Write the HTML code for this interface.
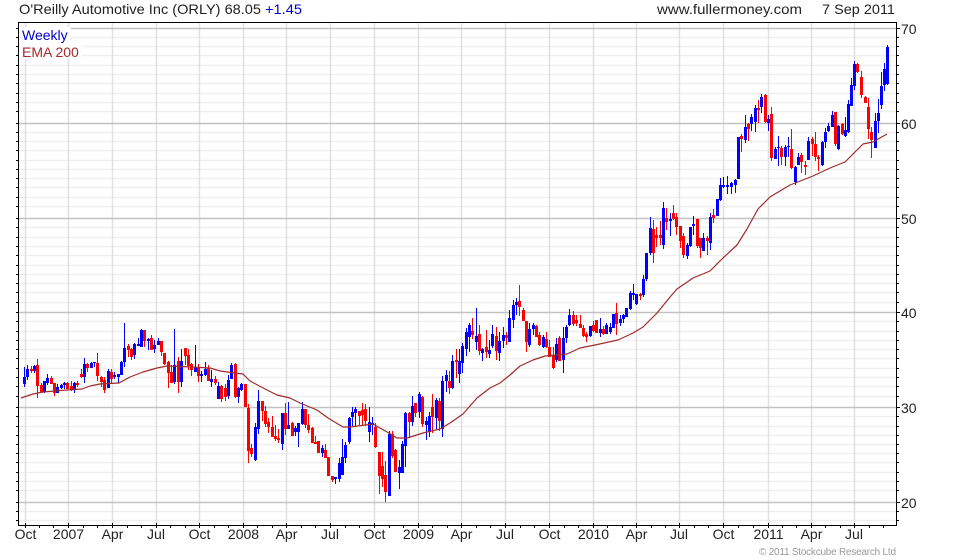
<!DOCTYPE html>
<html><head><meta charset="utf-8"><title>ORLY</title>
<style>
html,body{margin:0;padding:0;background:#fff;width:980px;height:560px;overflow:hidden}
svg{display:block}
text{font-family:"Liberation Sans",Arial,sans-serif;font-size:14px;fill:#222}
</style></head><body>
<svg width="980" height="560" viewBox="0 0 980 560" xmlns="http://www.w3.org/2000/svg">
<g fill="none" stroke-width="1.5">
<path stroke="#efefef" d="M19 37.5H896M19 46.5H896M19 55.5H896M19 65.5H896M19 74.5H896M19 83.5H896M19 93.5H896M19 102.5H896M19 111.5H896M19 132.5H896M19 141.5H896M19 150.5H896M19 160.5H896M19 169.5H896M19 178.5H896M19 187.5H896M19 197.5H896M19 206.5H896M19 227.5H896M19 237.5H896M19 246.5H896M19 255.5H896M19 265.5H896M19 274.5H896M19 283.5H896M19 292.5H896M19 302.5H896M19 321.5H896M19 331.5H896M19 340.5H896M19 349.5H896M19 358.5H896M19 368.5H896M19 377.5H896M19 386.5H896M19 396.5H896M19 416.5H896M19 426.5H896M19 435.5H896M19 444.5H896M19 453.5H896M19 462.5H896M19 472.5H896M19 481.5H896M19 490.5H896M19 511.5H896M19 520.5H896"/>
<path stroke="#e0e0e0" d="M25.5 23V525M68.5 23V525M112.5 23V525M156.5 23V525M199.5 23V525M243.5 23V525M286.5 23V525M330.5 23V525M374.5 23V525M418.5 23V525M461.5 23V525M505.5 23V525M549.5 23V525M593.5 23V525M636.5 23V525M679.5 23V525M723.5 23V525M768.5 23V525M811.5 23V525M854.5 23V525"/>
<path stroke="#c2c2c2" d="M19 28.5H896M19 123.5H896M19 218.5H896M19 312.5H896M19 407.5H896M19 502.5H896"/>
</g>
<rect x="19" y="27" width="52" height="16" fill="#fff"/>
<rect x="19" y="43" width="63" height="16" fill="#fff"/>
<path shape-rendering="crispEdges" fill="#f00" d="M30 369h3v2h-3zM31 366h1v7h-1zM36 365h3v21h-3zM37 359h1v39h-1zM40 385h3v7h-3zM41 383h1v10h-1zM50 378h3v6h-3zM51 376h1v8h-1zM53 383h3v10h-3zM54 383h1v13h-1zM66 383h3v6h-3zM67 382h1v7h-1zM70 386h3v4h-3zM71 381h1v10h-1zM76 383h3v2h-3zM77 381h1v6h-1zM80 374h3v3h-3zM81 369h1v9h-1zM86 364h3v4h-3zM87 363h1v9h-1zM96 363h3v13h-3zM97 353h1v28h-1zM100 377h3v5h-3zM101 376h1v11h-1zM103 380h3v10h-3zM104 377h1v16h-1zM110 372h3v7h-3zM111 369h1v15h-1zM127 346h3v4h-3zM128 344h1v13h-1zM130 349h3v8h-3zM131 348h1v12h-1zM143 330h3v11h-3zM144 330h1v17h-1zM150 338h3v12h-3zM151 335h1v15h-1zM160 341h3v11h-3zM161 341h1v15h-1zM163 353h3v11h-3zM164 353h1v12h-1zM167 362h3v11h-3zM168 361h1v27h-1zM170 372h3v11h-3zM171 365h1v18h-1zM177 361h3v21h-3zM178 357h1v36h-1zM184 348h3v8h-3zM185 348h1v17h-1zM187 355h3v11h-3zM188 349h1v21h-1zM190 364h3v6h-3zM191 363h1v13h-1zM197 368h3v8h-3zM198 364h1v18h-1zM207 368h3v13h-3zM208 365h1v16h-1zM214 379h3v4h-3zM215 376h1v9h-1zM220 386h3v13h-3zM221 385h1v17h-1zM224 388h3v9h-3zM225 384h1v17h-1zM234 364h3v33h-3zM235 363h1v35h-1zM244 384h3v23h-3zM245 384h1v23h-1zM247 408h3v43h-3zM248 404h1v59h-1zM250 448h3v6h-3zM251 444h1v13h-1zM261 401h3v10h-3zM262 401h1v20h-1zM264 411h3v13h-3zM265 406h1v21h-1zM267 422h3v5h-3zM268 418h1v15h-1zM271 427h3v10h-3zM272 416h1v21h-1zM274 436h3v3h-3zM275 425h1v16h-1zM277 438h3v2h-3zM278 429h1v14h-1zM284 413h3v16h-3zM285 403h1v32h-1zM291 423h3v13h-3zM292 422h1v14h-1zM304 409h3v16h-3zM305 409h1v19h-1zM307 425h3v5h-3zM308 414h1v19h-1zM311 428h3v15h-3zM312 427h1v16h-1zM314 442h3v2h-3zM315 436h1v8h-1zM317 441h3v12h-3zM318 441h1v12h-1zM324 450h3v8h-3zM325 444h1v14h-1zM327 457h3v19h-3zM328 457h1v19h-1zM331 476h3v4h-3zM332 476h1v6h-1zM358 411h3v5h-3zM359 411h1v14h-1zM361 410h3v5h-3zM362 403h1v23h-1zM364 409h3v12h-3zM365 404h1v22h-1zM374 427h3v20h-3zM375 423h1v25h-1zM378 452h3v24h-3zM379 452h1v42h-1zM381 466h3v13h-3zM382 452h1v35h-1zM384 475h3v17h-3zM385 461h1v41h-1zM391 434h3v22h-3zM392 431h1v27h-1zM394 450h3v22h-3zM395 449h1v23h-1zM408 413h3v9h-3zM409 412h1v26h-1zM414 403h3v10h-3zM415 403h1v14h-1zM421 397h3v27h-3zM422 396h1v31h-1zM431 407h3v10h-3zM432 394h1v39h-1zM438 401h3v20h-3zM439 398h1v33h-1zM448 381h3v7h-3zM449 371h1v23h-1zM455 360h3v2h-3zM456 349h1v29h-1zM471 331h3v4h-3zM472 318h1v21h-1zM478 334h3v17h-3zM479 325h1v30h-1zM485 347h3v5h-3zM486 330h1v28h-1zM495 336h3v15h-3zM496 327h1v33h-1zM505 335h3v3h-3zM506 332h1v13h-1zM518 301h3v6h-3zM519 285h1v31h-1zM522 310h3v11h-3zM523 308h1v13h-1zM525 321h3v21h-3zM526 321h1v31h-1zM535 326h3v11h-3zM536 325h1v12h-1zM538 335h3v10h-3zM539 332h1v14h-1zM545 339h3v8h-3zM546 332h1v16h-1zM548 347h3v10h-3zM549 340h1v17h-1zM552 355h3v13h-3zM553 347h1v22h-1zM558 338h3v23h-3zM559 336h1v25h-1zM572 315h3v9h-3zM573 311h1v15h-1zM575 320h3v3h-3zM576 315h1v11h-1zM579 324h3v4h-3zM580 315h1v13h-1zM582 328h3v8h-3zM583 325h1v12h-1zM585 334h3v3h-3zM586 332h1v10h-1zM592 325h3v6h-3zM593 321h1v11h-1zM595 320h3v13h-3zM596 320h1v13h-1zM602 329h3v5h-3zM603 326h1v9h-1zM615 313h3v11h-3zM616 303h1v32h-1zM639 294h3v2h-3zM640 293h1v7h-1zM652 229h3v24h-3zM653 220h1v43h-1zM655 235h3v3h-3zM656 227h1v20h-1zM659 235h3v3h-3zM660 221h1v24h-1zM665 218h3v4h-3zM666 208h1v22h-1zM672 213h3v6h-3zM673 205h1v15h-1zM675 217h3v10h-3zM676 213h1v22h-1zM679 226h3v15h-3zM680 226h1v22h-1zM682 236h3v19h-3zM683 233h1v25h-1zM696 219h3v27h-3zM697 219h1v29h-1zM699 238h3v10h-3zM700 238h1v20h-1zM706 238h3v3h-3zM707 236h1v19h-1zM712 215h3v3h-3zM713 209h1v14h-1zM740 136h3v3h-3zM741 134h1v18h-1zM747 124h3v5h-3zM748 123h1v18h-1zM757 108h3v2h-3zM758 100h1v23h-1zM764 95h3v27h-3zM765 94h1v29h-1zM770 114h3v44h-3zM771 107h1v54h-1zM780 148h3v9h-3zM781 146h1v19h-1zM790 149h3v19h-3zM791 129h1v40h-1zM800 155h3v7h-3zM801 153h1v20h-1zM804 165h3v2h-3zM805 161h1v14h-1zM811 139h3v5h-3zM812 137h1v19h-1zM814 144h3v13h-3zM815 132h1v29h-1zM817 157h3v2h-3zM818 155h1v16h-1zM834 112h3v32h-3zM835 112h1v34h-1zM841 124h3v10h-3zM842 123h1v12h-1zM856 64h3v8h-3zM857 63h1v10h-1zM860 77h3v18h-3zM861 71h1v27h-1zM864 97h3v6h-3zM865 96h1v7h-1zM867 107h3v22h-3zM868 98h1v41h-1zM870 132h3v8h-3zM871 127h1v31h-1z"/>
<path shape-rendering="crispEdges" fill="#00f" d="M23 377h3v7h-3zM24 367h1v20h-1zM26 369h3v8h-3zM27 365h1v15h-1zM33 366h3v5h-3zM34 365h1v8h-1zM43 381h3v11h-3zM44 381h1v12h-1zM46 378h3v5h-3zM47 374h1v11h-1zM56 387h3v6h-3zM57 384h1v9h-1zM60 385h3v3h-3zM61 384h1v5h-1zM63 383h3v2h-3zM64 382h1v7h-1zM73 383h3v7h-3zM74 382h1v11h-1zM83 364h3v13h-3zM84 358h1v25h-1zM90 363h3v5h-3zM91 362h1v6h-1zM93 362h3v1h-3zM94 362h1v5h-1zM107 371h3v17h-3zM108 369h1v19h-1zM113 375h3v2h-3zM114 372h1v7h-1zM117 374h3v3h-3zM118 374h1v9h-1zM120 362h3v13h-3zM121 361h1v14h-1zM123 348h3v14h-3zM124 323h1v44h-1zM133 344h3v11h-3zM134 343h1v16h-1zM137 344h3v2h-3zM138 338h1v8h-1zM140 330h3v17h-3zM141 329h1v18h-1zM147 339h3v2h-3zM148 338h1v12h-1zM153 345h3v4h-3zM154 340h1v13h-1zM157 341h3v4h-3zM158 338h1v7h-1zM173 365h3v17h-3zM174 329h1v55h-1zM180 361h3v21h-3zM181 349h1v38h-1zM194 367h3v5h-3zM195 345h1v27h-1zM200 374h3v2h-3zM201 371h1v11h-1zM204 369h3v6h-3zM205 362h1v14h-1zM210 379h3v3h-3zM211 370h1v17h-1zM217 386h3v13h-3zM218 382h1v17h-1zM227 380h3v16h-3zM228 375h1v24h-1zM230 365h3v14h-3zM231 363h1v16h-1zM237 388h3v9h-3zM238 387h1v16h-1zM240 384h3v6h-3zM241 383h1v8h-1zM254 427h3v33h-3zM255 423h1v38h-1zM257 401h3v28h-3zM258 390h1v44h-1zM281 413h3v31h-3zM282 413h1v37h-1zM287 425h3v4h-3zM288 402h1v27h-1zM294 428h3v4h-3zM295 426h1v10h-1zM297 423h3v9h-3zM298 423h1v24h-1zM301 409h3v15h-3zM302 402h1v23h-1zM321 448h3v5h-3zM322 445h1v12h-1zM334 477h3v2h-3zM335 477h1v7h-1zM338 463h3v16h-3zM339 458h1v24h-1zM341 457h3v18h-3zM342 439h1v36h-1zM344 445h3v13h-3zM345 442h1v21h-1zM348 418h3v24h-3zM349 417h1v27h-1zM351 412h3v5h-3zM352 407h1v19h-1zM354 409h3v4h-3zM355 407h1v19h-1zM368 422h3v10h-3zM369 407h1v35h-1zM371 423h3v2h-3zM372 417h1v18h-1zM388 434h3v62h-3zM389 431h1v65h-1zM398 467h3v6h-3zM399 460h1v29h-1zM401 444h3v29h-3zM402 441h1v26h-1zM404 413h3v33h-3zM405 412h1v55h-1zM411 406h3v16h-3zM412 396h1v30h-1zM418 394h3v18h-3zM419 392h1v26h-1zM425 421h3v4h-3zM426 417h1v23h-1zM428 416h3v16h-3zM429 412h1v25h-1zM435 400h3v18h-3zM436 398h1v31h-1zM441 381h3v48h-3zM442 376h1v61h-1zM445 375h3v6h-3zM446 370h1v22h-1zM451 361h3v27h-3zM452 355h1v34h-1zM458 361h3v13h-3zM459 349h1v34h-1zM461 346h3v17h-3zM462 343h1v30h-1zM465 332h3v17h-3zM466 328h1v28h-1zM468 325h3v12h-3zM469 323h1v29h-1zM475 336h3v6h-3zM476 308h1v42h-1zM481 349h3v4h-3zM482 348h1v13h-1zM488 350h3v4h-3zM489 340h1v18h-1zM491 334h3v12h-3zM492 325h1v23h-1zM498 341h3v12h-3zM499 332h1v29h-1zM502 335h3v6h-3zM503 327h1v21h-1zM508 318h3v24h-3zM509 310h1v32h-1zM512 305h3v15h-3zM513 300h1v28h-1zM515 302h3v3h-3zM516 298h1v17h-1zM528 329h3v16h-3zM529 323h1v24h-1zM532 325h3v4h-3zM533 323h1v12h-1zM542 337h3v10h-3zM543 335h1v13h-1zM555 344h3v16h-3zM556 338h1v24h-1zM562 338h3v22h-3zM563 327h1v46h-1zM565 327h3v11h-3zM566 325h1v18h-1zM568 315h3v10h-3zM569 309h1v17h-1zM589 326h3v10h-3zM590 326h1v11h-1zM599 329h3v4h-3zM600 318h1v19h-1zM605 325h3v9h-3zM606 323h1v11h-1zM609 327h3v5h-3zM610 323h1v11h-1zM612 314h3v14h-3zM613 314h1v13h-1zM619 319h3v4h-3zM620 315h1v11h-1zM622 315h3v4h-3zM623 314h1v9h-1zM625 308h3v9h-3zM626 308h1v9h-1zM629 293h3v16h-3zM630 291h1v19h-1zM632 293h3v2h-3zM633 284h1v16h-1zM635 294h3v10h-3zM636 294h1v11h-1zM642 279h3v16h-3zM643 275h1v22h-1zM645 253h3v26h-3zM646 253h1v28h-1zM649 228h3v25h-3zM650 217h1v38h-1zM662 208h3v37h-3zM663 202h1v47h-1zM669 219h3v2h-3zM670 213h1v23h-1zM686 245h3v11h-3zM687 243h1v16h-1zM689 227h3v19h-3zM690 227h1v20h-1zM692 224h3v2h-3zM693 216h1v19h-1zM702 238h3v13h-3zM703 233h1v18h-1zM709 217h3v26h-3zM710 213h1v37h-1zM716 199h3v17h-3zM717 199h1v17h-1zM719 185h3v15h-3zM720 178h1v23h-1zM722 185h3v2h-3zM723 177h1v11h-1zM726 185h3v2h-3zM727 176h1v18h-1zM730 183h3v4h-3zM731 182h1v12h-1zM734 180h3v5h-3zM735 179h1v14h-1zM737 137h3v42h-3zM738 137h1v42h-1zM744 127h3v13h-3zM745 115h1v28h-1zM750 117h3v7h-3zM751 114h1v17h-1zM754 108h3v14h-3zM755 105h1v27h-1zM760 97h3v10h-3zM761 94h1v19h-1zM767 119h3v4h-3zM768 115h1v16h-1zM774 149h3v10h-3zM775 147h1v12h-1zM777 147h3v1h-3zM778 136h1v30h-1zM784 147h3v10h-3zM785 145h1v21h-1zM787 146h3v1h-3zM788 137h1v20h-1zM794 167h3v15h-3zM795 166h1v19h-1zM797 157h3v8h-3zM798 153h1v12h-1zM807 141h3v19h-3zM808 137h1v23h-1zM821 142h3v23h-3zM822 141h1v25h-1zM824 132h3v10h-3zM825 128h1v20h-1zM827 126h3v5h-3zM828 123h1v9h-1zM831 115h3v12h-3zM832 111h1v16h-1zM837 126h3v23h-3zM838 125h1v25h-1zM844 130h3v6h-3zM845 117h1v20h-1zM847 104h3v28h-3zM848 100h1v33h-1zM850 85h3v21h-3zM851 78h1v28h-1zM853 64h3v22h-3zM854 61h1v29h-1zM874 121h3v27h-3zM875 113h1v35h-1zM877 113h3v8h-3zM878 99h1v34h-1zM880 86h3v19h-3zM881 72h1v37h-1zM883 69h3v16h-3zM884 63h1v28h-1zM886 47h3v37h-3zM887 45h1v40h-1z"/>
<polyline fill="none" stroke="#a02c2c" stroke-width="1.2" stroke-linejoin="round" points="21,398 33,394 43,392 67,390 82,389 90,386 100,384 119,383 130,377 143,372 157,368 167,366 193,367 210,368 220,371 243,374 250,381 267,390 277,395 290,398 300,403 317,410 328,418 343,427 350,427 373,424 387,432 397,438 407,438 423,433 440,429 450,423 463,414 477,398 490,388 500,383 510,375 520,366 533,360 545,356 567,354 580,348 595,345 618,340 633,333 643,327 657,313 670,297 677,289 693,278 710,271 723,258 737,245 747,229 758,209 770,197 790,185 813,176 830,168 845,162 855,152 863,144 873,142 887,134"/>
<g shape-rendering="crispEdges" fill="none" stroke="#000">
<path d="M18 22.5H897M18.5 22V526M18 525.5H897M896.5 22V526"/>
<path d="M16 28.5H18M16 37.5H18M16 46.5H18M16 55.5H18M16 65.5H18M16 74.5H18M16 83.5H18M16 93.5H18M16 102.5H18M16 111.5H18M16 123.5H18M16 132.5H18M16 141.5H18M16 150.5H18M16 160.5H18M16 169.5H18M16 178.5H18M16 187.5H18M16 197.5H18M16 206.5H18M16 218.5H18M16 227.5H18M16 237.5H18M16 246.5H18M16 255.5H18M16 265.5H18M16 274.5H18M16 283.5H18M16 292.5H18M16 302.5H18M16 312.5H18M16 321.5H18M16 331.5H18M16 340.5H18M16 349.5H18M16 358.5H18M16 368.5H18M16 377.5H18M16 386.5H18M16 396.5H18M16 407.5H18M16 416.5H18M16 426.5H18M16 435.5H18M16 444.5H18M16 453.5H18M16 462.5H18M16 472.5H18M16 481.5H18M16 490.5H18M16 502.5H18M16 511.5H18M16 520.5H18"/>
<path d="M897 28.5H900M897 37.5H899M897 46.5H899M897 55.5H899M897 65.5H899M897 74.5H899M897 83.5H899M897 93.5H899M897 102.5H899M897 111.5H899M897 123.5H900M897 132.5H899M897 141.5H899M897 150.5H899M897 160.5H899M897 169.5H899M897 178.5H899M897 187.5H899M897 197.5H899M897 206.5H899M897 218.5H900M897 227.5H899M897 237.5H899M897 246.5H899M897 255.5H899M897 265.5H899M897 274.5H899M897 283.5H899M897 292.5H899M897 302.5H899M897 312.5H900M897 321.5H899M897 331.5H899M897 340.5H899M897 349.5H899M897 358.5H899M897 368.5H899M897 377.5H899M897 386.5H899M897 396.5H899M897 407.5H900M897 416.5H899M897 426.5H899M897 435.5H899M897 444.5H899M897 453.5H899M897 462.5H899M897 472.5H899M897 481.5H899M897 490.5H899M897 502.5H900M897 511.5H899M897 520.5H899"/>
<path d="M25.5 523V528M68.5 523V528M112.5 523V528M156.5 523V528M199.5 523V528M243.5 523V528M286.5 523V528M330.5 523V528M374.5 523V528M418.5 523V528M461.5 523V528M505.5 523V528M549.5 523V528M593.5 523V528M636.5 523V528M679.5 523V528M723.5 523V528M768.5 523V528M811.5 523V528M854.5 523V528"/>
<path d="M39.5 526V528M53.5 526V528M83.5 526V528M97.5 526V528M127.5 526V528M141.5 526V528M170.5 526V528M185.5 526V528M214.5 526V528M228.5 526V528M257.5 526V528M272.5 526V528M301.5 526V528M315.5 526V528M345.5 526V528M359.5 526V528M389.5 526V528M403.5 526V528M432.5 526V528M447.5 526V528M476.5 526V528M490.5 526V528M520.5 526V528M534.5 526V528M564.5 526V528M578.5 526V528M607.5 526V528M622.5 526V528M651.5 526V528M665.5 526V528M694.5 526V528M708.5 526V528M738.5 526V528M753.5 526V528M782.5 526V528M796.5 526V528M825.5 526V528M840.5 526V528M869.5 526V528M883.5 526V528"/>
</g>
<text x="19" y="14" textLength="242" lengthAdjust="spacingAndGlyphs">O'Reilly Automotive Inc (ORLY) 68.05</text>
<text x="265" y="14" textLength="37" lengthAdjust="spacingAndGlyphs" style="fill:#0000cc">+1.45</text>
<text x="657" y="14" textLength="145" lengthAdjust="spacingAndGlyphs">www.fullermoney.com</text>
<text x="822" y="14" textLength="73" lengthAdjust="spacingAndGlyphs">7 Sep 2011</text>
<text x="22" y="40" style="fill:#0000cd">Weekly</text>
<text x="22" y="57" style="fill:#a52a2a">EMA 200</text>
<text x="901" y="34">70</text><text x="901" y="129">60</text><text x="901" y="224">50</text><text x="901" y="318">40</text><text x="901" y="413">30</text><text x="901" y="508">20</text>
<g text-anchor="middle">
<text x="25.5" y="539">Oct</text><text x="68.5" y="539">2007</text><text x="112.5" y="539">Apr</text><text x="156" y="539">Jul</text><text x="199.5" y="539">Oct</text><text x="243.5" y="539">2008</text><text x="286.5" y="539">Apr</text><text x="330" y="539">Jul</text><text x="374.5" y="539">Oct</text><text x="418.5" y="539">2009</text><text x="461.5" y="539">Apr</text><text x="505" y="539">Jul</text><text x="549.5" y="539">Oct</text><text x="593.5" y="539">2010</text><text x="636.5" y="539">Apr</text><text x="679" y="539">Jul</text><text x="723.5" y="539">Oct</text><text x="768.5" y="539">2011</text><text x="811.5" y="539">Apr</text><text x="854" y="539">Jul</text>
</g>
<text x="759" y="555" textLength="137" lengthAdjust="spacing" style="font-size:10px;fill:#999">© 2011 Stockcube Research Ltd</text>
</svg>
</body></html>
